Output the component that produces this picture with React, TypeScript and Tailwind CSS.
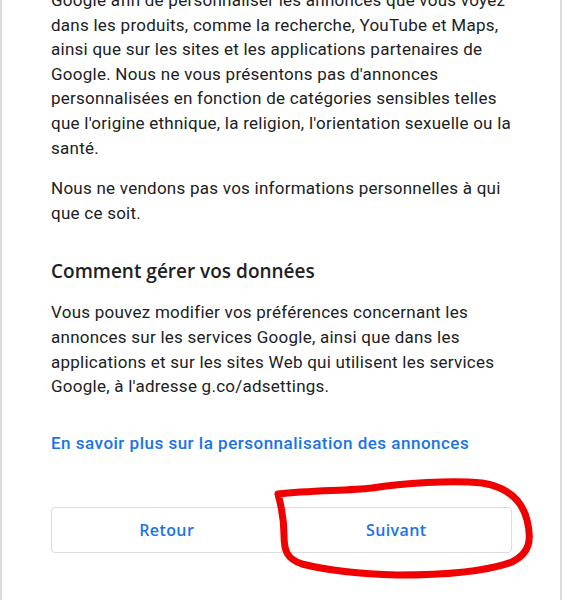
import React from "react";

const body =
  "font-['Roboto','Liberation_Sans',sans-serif] text-[17px] tracking-[0.25px] leading-[24.6px] text-[#202124]";
const btn =
  "flex-1 font-['Open_Sans','Noto_Sans',sans-serif] text-[16px] font-semibold tracking-[0.4px] text-[#1a73e8]";

export default function App() {
  return (
    <div className="relative h-[600px] w-full overflow-hidden border-x-2 border-[#dcdcdc] bg-white">
      <div className="-mt-[12px] w-[514px] pl-[49px]">
        <p className={body}>
          Google afin de personnaliser les annonces que vous voyez dans les produits, comme la recherche, YouTube et
          Maps, ainsi que sur les sites et les applications partenaires de Google. Nous ne vous présentons pas
          d'annonces personnalisées en fonction de catégories sensibles telles que l'origine ethnique, la religion,
          l'orientation sexuelle ou la santé.
        </p>
        <p className={`${body} mt-[16px]`}>
          Nous ne vendons pas vos informations personnelles à qui que ce soit.
        </p>
        <h2 className="mt-[34px] font-['Open_Sans','Noto_Sans',sans-serif] text-[19px] font-semibold leading-[24px] text-[#202124]">
          Comment gérer vos données
        </h2>
        <p className={`${body} mt-[17px]`}>
          Vous pouvez modifier vos préférences concernant les annonces sur les services Google, ainsi que dans les
          applications et sur les sites Web qui utilisent les services Google, à l'adresse g.co/adsettings.
        </p>
        <a className="mt-[32px] block font-['Roboto','Liberation_Sans',sans-serif] text-[17px] font-medium leading-[24.6px] tracking-[0.5px] text-[#1a73e8]">
          En savoir plus sur la personnalisation des annonces
        </a>
      </div>

      <div className="ml-[49px] mt-[52px] flex h-[46px] w-[461px] rounded-[4px] border border-[#dadce0]">
        <button className={btn}>Retour</button>
        <button className={btn}>Suivant</button>
      </div>

      <svg className="pointer-events-none absolute left-0 top-0" width="562" height="600" viewBox="0 0 562 600">
        <path
          d="M276 494 C 310 490, 345 491, 370 488 C 400 483, 450 480, 480 483 C 505 487, 520 500, 525 520 C 530 540, 528 553, 510 562 C 480 573, 430 575, 395 575 C 355 574, 320 569, 300 564 C 285 559, 282 551, 282 535 C 282 520, 279 505, 276 494"
          fill="none"
          stroke="#f00000"
          strokeWidth="7"
          strokeLinecap="round"
          strokeLinejoin="round"
        />
      </svg>
    </div>
  );
}
